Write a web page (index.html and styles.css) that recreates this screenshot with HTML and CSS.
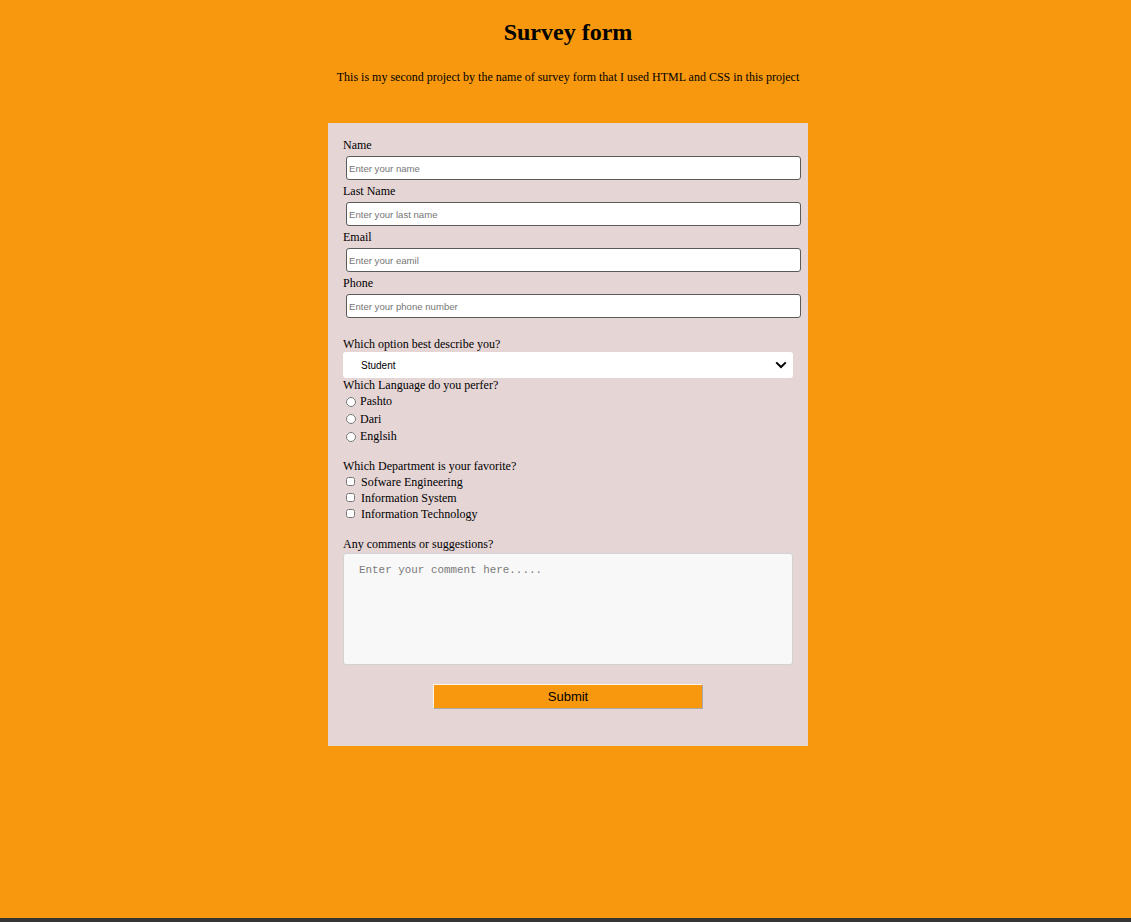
FILE: index.html
```html
<!DOCTYPE html>
<html lang="en">
<head>
<meta charset="utf-8">
<title>Survey form</title>
<link rel="stylesheet" href="styles.css">
</head>
<body>
<main class="page">
  <header class="intro">
    <h1 class="title">Survey form</h1>
    <p class="lead">This is my second project by the name of survey form that I used HTML and CSS in this project</p>
  </header>
  <form class="survey">
    <label class="lbl" for="name">Name</label>
    <input class="txt" id="name" type="text" placeholder="Enter your name">
    <label class="lbl" for="lname">Last Name</label>
    <input class="txt" id="lname" type="text" placeholder="Enter your last name">
    <label class="lbl" for="email">Email</label>
    <input class="txt" id="email" type="email" placeholder="Enter your eamil">
    <label class="lbl" for="phone">Phone</label>
    <input class="txt" id="phone" type="tel" placeholder="Enter your phone number">

    <label class="lbl lbl-gap" for="role">Which option best describe you?</label>
    <div class="select-wrap">
      <select class="sel" id="role">
        <option>Student</option>
        <option>Teacher</option>
        <option>Other</option>
      </select>
      <svg class="chev" width="12" height="8" viewBox="0 0 12 8" aria-hidden="true"><path d="M1.2 1.4 L6 6 L10.8 1.4" fill="none" stroke="#000" stroke-width="2"/></svg>
    </div>

    <div class="lbl">Which Language do you perfer?</div>
    <div class="group">
      <label class="radio-row"><input class="radio" type="radio" name="lang">Pashto</label>
      <label class="radio-row"><input class="radio" type="radio" name="lang">Dari</label>
      <label class="radio-row"><input class="radio" type="radio" name="lang">Englsih</label>
    </div>

    <div class="lbl lbl-gap2">Which Department is your favorite?</div>
    <div class="group">
      <label class="check-row"><input class="check" type="checkbox">Sofware Engineering</label>
      <label class="check-row"><input class="check" type="checkbox">Information System</label>
      <label class="check-row"><input class="check" type="checkbox">Information Technology</label>
    </div>

    <label class="lbl lbl-gap" for="comment">Any comments or suggestions?</label>
    <textarea class="area" id="comment" placeholder="Enter your comment here....."></textarea>

    <div class="actions">
      <button class="submit" type="submit">Submit</button>
    </div>
  </form>
  <div class="spacer"></div>
  <div class="bottom-bar"></div>
</main>
</body>
</html>
```

FILE: styles.css
```css
html, body {
  margin: 0;
  padding: 0;
}
body {
  background: #f7980e;
  font-family: "Liberation Serif", "Times New Roman", serif;
  color: #000;
}
.page {
  min-height: 100vh;
  display: flex;
  flex-direction: column;
  align-items: center;
}
.intro {
  padding-top: 18px;
  padding-left: 5px;
  text-align: center;
}
.title {
  margin: 0;
  font-size: 24px;
  line-height: 28px;
  font-weight: bold;
}
.lead {
  margin: 24px 0 0 0;
  font-size: 12px;
  line-height: 14px;
}
.survey {
  margin: 39px 0 0 5px;
  width: 480px;
  box-sizing: border-box;
  padding: 15px 15px 37px 15px;
  background: #e5d5d5;
  display: flex;
  flex-direction: column;
  align-items: flex-start;
}
.lbl {
  display: block;
  font-size: 12px;
  line-height: 14px;
}
.lbl-gap {
  margin-top: 15px;
}
.lbl-gap2 {
  margin-top: 13.5px;
}
.txt {
  display: block;
  box-sizing: border-box;
  width: 455px;
  height: 24px;
  margin: 4px 0 4px 3px;
  padding: 0 2px;
  border: 1px solid #5a5a5a;
  border-radius: 3px;
  background: #fff;
  font-family: "Liberation Sans", Arial, sans-serif;
  font-size: 9.6px;
  color: #000;
}
.txt::placeholder {
  color: #767676;
}
.select-wrap {
  position: relative;
  margin-top: 1px;
  width: 450px;
  height: 26px;
}
.sel {
  appearance: none;
  -webkit-appearance: none;
  box-sizing: border-box;
  width: 450px;
  height: 26px;
  margin: 0;
  padding: 0 0 0 18px;
  border: none;
  border-radius: 3px;
  background: #fff;
  font-family: "Liberation Sans", Arial, sans-serif;
  font-size: 10px;
  color: #000;
}
.chev {
  position: absolute;
  right: 6px;
  top: 9px;
  pointer-events: none;
}
.group {
  display: flex;
  flex-direction: column;
  margin-top: 1px;
}
.radio-row, .check-row {
  display: flex;
  align-items: center;
  font-size: 12px;
}
.radio-row {
  height: 17.5px;
}
.check-row {
  height: 16px;
}
.radio {
  width: 10px;
  height: 10px;
  margin: 0 4px 0 3px;
}
.check {
  width: 9px;
  height: 9px;
  margin: 0 6px 2px 3px;
}
.area {
  display: block;
  box-sizing: border-box;
  width: 450px;
  height: 112px;
  margin: 2px 0 0 0;
  padding: 10px 15px;
  border: 1px solid #d2d2d2;
  border-radius: 3px;
  background: #f8f8f8;
  font-family: "Liberation Mono", "Courier New", monospace;
  font-size: 10.9px;
  resize: none;
}
.area::placeholder {
  color: #7a7a7a;
}
.actions {
  align-self: stretch;
  display: flex;
  justify-content: center;
  margin-top: 19px;
}
.submit {
  box-sizing: border-box;
  width: 270px;
  height: 25px;
  margin: 0;
  padding: 0;
  background: #f7980e;
  border: 1px solid;
  border-color: #fff6e8 #a9a9a9 #a9a9a9 #fff6e8;
  font-family: "Liberation Sans", Arial, sans-serif;
  font-size: 13px;
  color: #000;
}
.spacer {
  flex: 1;
}
.bottom-bar {
  align-self: stretch;
  height: 4px;
  background: #353535;
}
```
